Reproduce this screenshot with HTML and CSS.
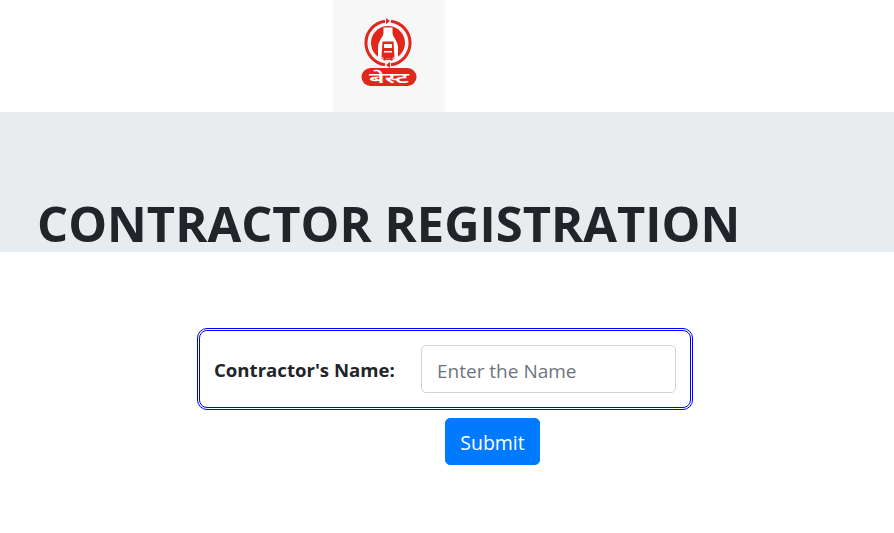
FILE: index.html
```html
<!DOCTYPE html>
<html>
<head>
    <title>Contractor Registration</title>
    <link rel="stylesheet" href="styles.css">
</head>
<body>
    <nav class="topbar">
        <a class="brand" href="#">
            <svg class="logo" width="112" height="112" viewBox="0 0 112 112">
                <path d="M58 21.200A22 22 0 0 1 58 64.800M52 64.800A22 22 0 0 1 52 21.200" fill="none" stroke="#e1261c" stroke-width="3"/>
                <path d="M53 18l4 3 -4 3zM57 62l-4 3 4 3z" fill="#e1261c"/>
                <circle cx="55" cy="43" r="17" fill="#e1261c"/>
                <path d="M50.500 27.500h9v5c0 5 5.500 8 5.500 15v11h-20v-11c0 -7 5.500 -10 5.500 -15z" fill="#fff"/>
                <path d="M49.500 41.500h11l1 16h-2v3h-2v-2h-5v2h-2v-3h-2z" fill="#e1261c"/>
                <rect x="51" y="44" width="8" height="4" fill="#fff"/>
                <rect x="51" y="51" width="8" height="1.500" fill="#fff"/>
                <rect x="28.500" y="68" width="55" height="18" rx="9" fill="#e1261c"/>
                <text class="logo-text" x="36" y="83" textLength="40" lengthAdjust="spacingAndGlyphs">बेस्ट</text>
            </svg>
        </a>
    </nav>
    <div class="jumbotron">
        <h1>CONTRACTOR REGISTRATION</h1>
    </div>
    <form class="reg-form">
        <div class="name-box">
            <label for="cname">Contractor's Name:</label>
            <input id="cname" type="text" placeholder="Enter the Name">
        </div>
        <button type="button" class="btn">Submit</button>
    </form>
</body>
</html>
```

FILE: styles.css
```css
body {
    font-family: "Open Sans", "Noto Sans", sans-serif;
    color: #212529;
    background-color: #fff;
    margin: 0;
    padding: 0;
}
.topbar {
    height: 112px;
    padding-left: 333px;
}
.brand {
    display: block;
    width: 112px;
    height: 112px;
    background-color: #f7f7f7;
}
.logo {
    display: block;
}
.logo-text {
    font-family: "Noto Sans", "Noto Sans Devanagari", sans-serif;
    font-size: 15px;
    font-weight: 600;
    fill: #fff;
}
.jumbotron {
    height: 140px;
    background-color: #e9ecef;
    padding-left: 37px;
    display: flex;
    align-items: flex-end;
}
h1 {
    margin: 0;
    font-size: 48.900px;
    font-weight: 700;
    line-height: 58px;
}
.reg-form {
    padding: 76px 0 0 197px;
}
.name-box {
    box-sizing: border-box;
    width: 496px;
    height: 82px;
    border: 3px double #00f;
    border-radius: 10px;
    padding: 0 14px;
    display: flex;
    align-items: center;
    justify-content: space-between;
}
label {
    font-size: 18.600px;
    font-weight: 700;
}
input {
    box-sizing: border-box;
    width: 255px;
    height: 48px;
    padding: 3px 15px 0;
    border: 1px solid #ced4da;
    border-radius: 5px;
    font-family: inherit;
    font-size: 19px;
    color: #495057;
}
input::placeholder {
    color: #6c757d;
}
.btn {
    display: block;
    box-sizing: border-box;
    width: 95px;
    height: 47px;
    margin: 8px 0 0 248px;
    padding: 1px 0 0;
    border: 1px solid #007bff;
    border-radius: 5px;
    background-color: #007bff;
    color: #fff;
    font-family: inherit;
    font-size: 19.500px;
}
```
